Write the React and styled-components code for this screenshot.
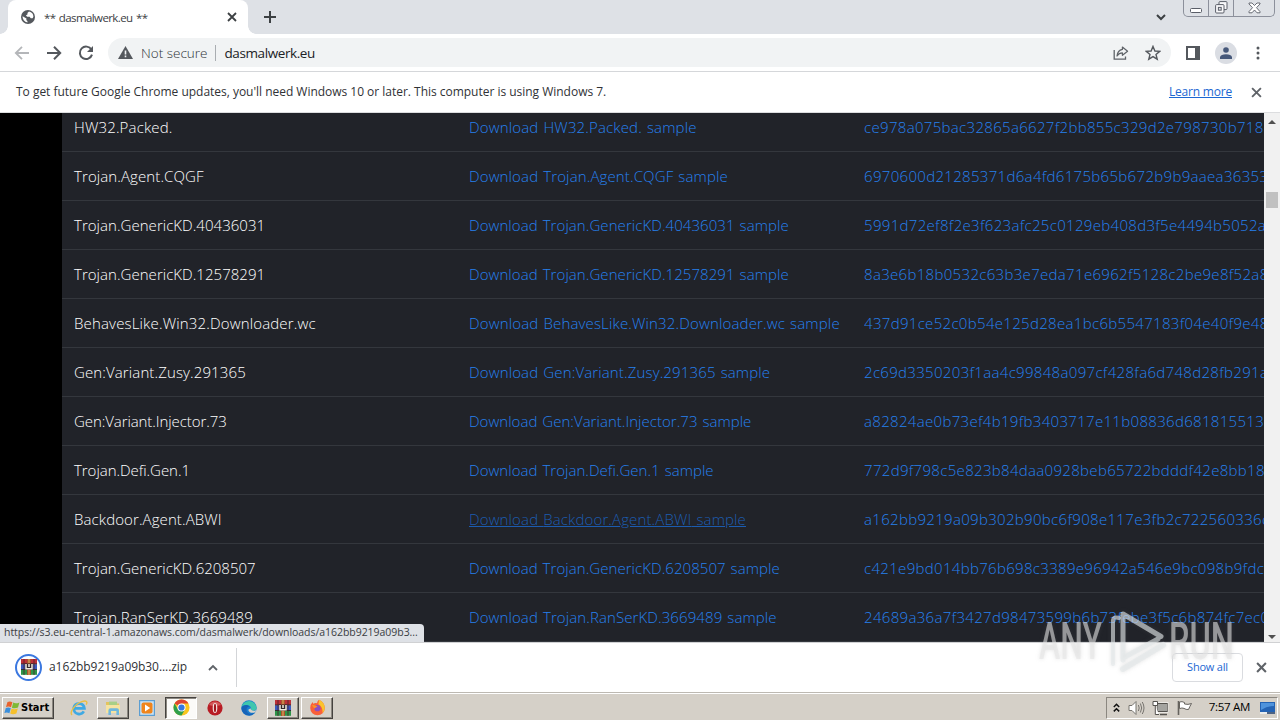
import React from 'react';
import styled, { createGlobalStyle } from 'styled-components';

const GlobalStyle = createGlobalStyle`
    * { box-sizing: border-box; }
    body {
        margin: 0;
        overflow: hidden;
        font-family: "Open Sans", "Noto Sans", sans-serif;
    }
    svg { display: block; flex: none; }
`;

// nameGap / linkGap: letter spacing of the two text columns
const rows = [
    { name: 'HW32.Packed.', nameGap: 0.15, linkGap: 0.15, hash: 'ce978a075bac32865a6627f2bb855c329d2e798730b718' },
    { name: 'Trojan.Agent.CQGF', nameGap: 0.1, linkGap: 0.13, hash: '6970600d21285371d6a4fd6175b65b672b9b9aaea36353' },
    { name: 'Trojan.GenericKD.40436031', nameGap: 0.04, linkGap: 0.07, hash: '5991d72ef8f2e3f623afc25c0129eb408d3f5e4494b5052a' },
    { name: 'Trojan.GenericKD.12578291', nameGap: 0.04, linkGap: 0.07, hash: '8a3e6b18b0532c63b3e7eda71e6962f5128c2be9e8f52a8' },
    { name: 'BehavesLike.Win32.Downloader.wc', nameGap: 0.16, linkGap: 0.155, hash: '437d91ce52c0b54e125d28ea1bc6b5547183f04e40f9e48' },
    { name: 'Gen:Variant.Zusy.291365', nameGap: 0.12, linkGap: 0.14, hash: '2c69d3350203f1aa4c99848a097cf428fa6d748d28fb291a' },
    { name: 'Gen:Variant.Injector.73', nameGap: -0.08, linkGap: 0.03, hash: 'a82824ae0b73ef4b19fb3403717e11b08836d681815513' },
    { name: 'Trojan.Defi.Gen.1', nameGap: -0.04, linkGap: 0.04, hash: '772d9f798c5e823b84daa0928beb65722bdddf42e8bb18' },
    { name: 'Backdoor.Agent.ABWI', nameGap: 0.1, linkGap: 0.13, hash: 'a162bb9219a09b302b90bc6f908e117e3fb2c722560336c', hovered: true },
    { name: 'Trojan.GenericKD.6208507', nameGap: 0, linkGap: 0.06, hash: 'c421e9bd014bb76b698c3389e96942a546e9bc098b9fdca' },
    { name: 'Trojan.RanSerKD.3669489', nameGap: 0.08, linkGap: 0.1, hash: '24689a36a7f3427d98473599b6b73febe3f5c6b874fc7ec0' },
];

const CloseIcon = ({ size = 10, color = '#5f6368', width = 2 }) => (
    <svg width={size} height={size} viewBox="0 0 10 10">
        <path d="M1 1L9 9M9 1L1 9" stroke={color} strokeWidth={width} />
    </svg>
);

const GlobeIcon = () => (
    <svg width="14" height="14" viewBox="0 0 14 14">
        <circle cx="7" cy="7" r="7" fill="#54585d" />
        <path d="M1.6 6.2L4.6 8.1L5.6 8.8L5.2 10L6.4 11L6.5 12.4A5.5 5.5 0 0 1 1.6 6.2Z" fill="#fff" />
        <path d="M8 1.5L6.4 3L6.6 4.2L4.9 5.4L6.2 6.7H8.6L9.8 8.3L11.6 8.2L12.4 6.8A5.5 5.5 0 0 0 8 1.5Z" fill="#fff" />
    </svg>
);

const WinrarIcon = ({ size = 18 }) => (
    <svg width={size} height={size} viewBox="0 0 18 18">
        <rect x="1" y="1" width="16" height="5" fill="#bd3038" />
        <rect x="1" y="6.3" width="16" height="5" fill="#3a5ac0" />
        <rect x="1" y="11.6" width="16" height="5.2" fill="#2d9447" />
        <path d="M1 6H17M1 11.5H17" stroke="#24242c" strokeWidth=".9" />
        <path d="M4 1V17M14 1V17" stroke="#4a2228" strokeWidth=".8" />
        <rect x="7" y="1" width="4" height="16" fill="#a8542e" />
        <path d="M9 1V5M9 12V17" stroke="#e6b860" strokeWidth="1" />
        <rect x="5" y="5.6" width="8" height="6" fill="#33282c" />
        <path d="M6 6V10.8H12V6M9 6V9" fill="none" stroke="#f3eee0" strokeWidth="1.5" />
    </svg>
);

const WindowsFlag = () => (
    <svg width="17" height="16" viewBox="0 0 17 16">
        <path d="M3.5 2Q6 .7 8.4 2.2L7 7.3Q4.6 6 2 7.1Z" fill="#e8622c" />
        <path d="M9.2 2.6Q12 4 15.4 2.4L14 7.6Q10.6 9 7.9 7.7Z" fill="#7fb935" />
        <path d="M1.8 8Q4.4 6.9 6.8 8.2L5.4 13.3Q3 12 .4 13.1Z" fill="#3b8fdc" />
        <path d="M7.6 8.6Q10.4 9.9 13.8 8.4L12.4 13.5Q9 15 6.2 13.6Z" fill="#f6c02c" />
    </svg>
);

const IeIcon = () => (
    <svg width="18" height="18" viewBox="0 0 18 18">
        <path d="M4 9.4H14.4A5.4 5.4 0 0 0 3.8 8.6V10A5.4 5.4 0 0 0 13.8 12.4" fill="none" stroke="#3fa9e3" strokeWidth="2.7" />
        <path d="M2 16C-.8 13.6 4.6 5.2 11.8 2.6C16.6 1 17.8 2.8 16.2 5.6" fill="none" stroke="#e9bf45" strokeWidth="1.4" />
    </svg>
);

const FolderIcon = () => (
    <svg width="18" height="18" viewBox="0 0 18 18">
        <path d="M2 3H7L8 4.5H15V14H2Z" fill="#e3c35f" />
        <path d="M5 2.6H13V6H5Z" fill="#a8cf86" />
        <path d="M2 6H16V14H2Z" fill="#f6e3a0" />
        <path d="M4.4 16V11.5Q4.4 9.3 6.5 9.3H13Q15 9.3 15 11.5V16H12.4V12H7V16Z" fill="#6fb7dc" />
    </svg>
);

const PlayerIcon = () => (
    <svg width="16" height="16" viewBox="0 0 16 16">
        <rect x=".6" y=".6" width="14.8" height="14.8" fill="#c9e1f4" stroke="#5c9ed2" strokeWidth="1.2" />
        <rect x="2.5" y="2.5" width="11" height="11" rx="2" fill="#f0851c" />
        <path d="M6 4.6L11.2 8L6 11.4Z" fill="#fff" />
    </svg>
);

const ChromeIcon = () => (
    <svg width="17" height="17" viewBox="0 0 18 18">
        <circle cx="9" cy="9" r="8.5" fill="#f8c51e" />
        <path d="M9 9L1.64 4.75A8.5 8.5 0 0 1 16.36 4.75H9Z" fill="#de4432" />
        <path d="M1.64 4.75A8.5 8.5 0 0 0 9 17.5L12.7 11.1L9 9L5.3 11.1Z" fill="#2e9f4c" />
        <circle cx="9" cy="9" r="4.3" fill="#fff" />
        <circle cx="9" cy="9" r="3.3" fill="#3478e0" />
    </svg>
);

const OperaIcon = () => (
    <svg width="16" height="16" viewBox="0 0 16 16">
        <circle cx="8" cy="8" r="7.6" fill="#b81c24" />
        <path d="M2 5A7 7 0 0 1 14 5Q8 7 2 5Z" fill="#d4585a" />
        <ellipse cx="8" cy="8" rx="2.3" ry="5" fill="#f4e3e1" />
        <ellipse cx="8" cy="8" rx="1.1" ry="4.3" fill="#a0141c" />
    </svg>
);

const EdgeIcon = () => (
    <svg width="16" height="16" viewBox="0 0 16 16">
        <circle cx="8" cy="8" r="7.7" fill="#1a7fd0" />
        <path d="M.5 7A7.7 7.7 0 0 1 15.7 8C15.4 10.6 12.2 11.2 9.8 10.2C11 8.2 9.4 5.2 6.2 5.2C3.4 5.2 1 6 .5 7Z" fill="#3fc6ae" />
        <path d="M.4 8C1.4 4.6 6.6 4 8.8 6.6C6.2 6.4 4.8 9 6 11.4C7.2 14 10.6 14.4 14 12.6A7.7 7.7 0 0 1 .4 8Z" fill="#1763b8" />
        <path d="M9.6 8.3C9.3 10.5 12.6 11.8 15.8 9.8L14.2 12.3C11 13.6 7.6 12.6 7.3 9.7Z" fill="#d8d3cb" />
    </svg>
);

const FirefoxIcon = () => (
    <svg width="17" height="17" viewBox="0 0 17 17">
        <path d="M10 .8Q15.8 3.6 15.8 9A7.3 7.3 0 0 1 1.2 9Q1.2 5.5 3.6 3L4.2 4.8Q6 3.6 8 4.2Q8.3 2.2 10 .8Z" fill="#f9603a" />
        <path d="M10 .8Q15.8 3.6 15.8 9Q15.6 12 13.6 14Q14 8 9.4 5.2Z" fill="#fbc42d" />
        <circle cx="8.4" cy="9.2" r="3.1" fill="#8a4fc4" />
        <path d="M3 6Q6.2 5.6 8.6 7.7Q6.4 8 5.6 9.6Q4 8.6 3 6Z" fill="#fb9327" />
    </svg>
);

const Watermark = () => (
    <WatermarkLayer>
        <svg width="200" height="72" viewBox="0 0 200 72">
            <g fill="#e6e6e6" fillOpacity=".58" fontFamily="Roboto, sans-serif" fontSize="51" fontWeight="500">
                <text x="3" y="51" textLength="63" lengthAdjust="spacingAndGlyphs">ANY</text>
                <text x="133" y="51" textLength="65" lengthAdjust="spacingAndGlyphs">RUN</text>
            </g>
            <g fill="none" stroke="#e3e8ea" strokeOpacity=".62" strokeLinecap="round" strokeLinejoin="round">
                <path d="M77 12V56M83 10Q77 8 77 13" strokeWidth="4" />
                <path d="M87 52V6L125 28.5M87 50L122 31" strokeWidth="5" />
                <path d="M87 61L127 37" strokeWidth="6" />
            </g>
        </svg>
    </WatermarkLayer>
);

export default function App() {
    return (
        <Screen>
            <GlobalStyle />
            <TabStrip>
                <Tab>
                    <GlobeIcon />
                    <TabTitle>** dasmalwerk.eu **</TabTitle>
                    <CloseIcon size={10} color="#3c4043" width={1.8} />
                </Tab>
                <NewTab>
                    <svg width="12" height="12" viewBox="0 0 12 12">
                        <path d="M6 0V12M0 6H12" stroke="#3c4043" strokeWidth="2" />
                    </svg>
                </NewTab>
                <TabSearch>
                    <svg width="10" height="7" viewBox="0 0 10 7">
                        <path d="M1 1L5 5L9 1" fill="none" stroke="#3c4043" strokeWidth="2" />
                    </svg>
                </TabSearch>
                <WindowControls>
                    <ControlButton $width={24}>
                        <svg width="13" height="6" viewBox="0 0 13 6">
                            <rect x=".5" y=".5" width="11" height="4" rx="1" fill="#fff" stroke="#5a5e68" />
                        </svg>
                    </ControlButton>
                    <ControlButton $width={25}>
                        <svg width="13" height="13" viewBox="0 0 13 13">
                            <rect x="4" y=".6" width="8" height="8" rx="1" fill="#f8f8fa" stroke="#5a5e68" />
                            <rect x=".6" y="3.6" width="8.4" height="8.4" rx="1" fill="#f8f8fa" stroke="#5a5e68" />
                            <rect x="3.4" y="6.4" width="2.8" height="2.8" fill="#dee1e6" stroke="#5a5e68" />
                        </svg>
                    </ControlButton>
                    <ControlButton $width={41}>
                        <svg width="13" height="12" viewBox="0 0 13 12">
                            <path d="M1 1H4L6.5 3.5L9 1H12V2L8.5 5.7L12 9.6V10.8H9L6.5 8L4 10.8H1V9.6L4.5 5.7L1 2Z" fill="#fff" stroke="#5a5e68" strokeWidth=".9" />
                        </svg>
                    </ControlButton>
                </WindowControls>
            </TabStrip>

            <Toolbar>
                <NavButton>
                    <svg width="16" height="16" viewBox="0 0 16 16">
                        <path d="M15 8H2M8 1.8L1.8 8L8 14.2" fill="none" stroke="#b4b6b9" strokeWidth="1.8" />
                    </svg>
                </NavButton>
                <NavButton>
                    <svg width="16" height="16" viewBox="0 0 16 16">
                        <path d="M1 8H14M8 1.8L14.2 8L8 14.2" fill="none" stroke="#54585d" strokeWidth="2" />
                    </svg>
                </NavButton>
                <NavButton>
                    <svg width="16" height="16" viewBox="0 0 16 16">
                        <path d="M13.4 4.6A6.2 6.2 0 1 0 14 9.6" fill="none" stroke="#54585d" strokeWidth="2" />
                        <path d="M15 1V7H9Z" fill="#54585d" />
                    </svg>
                </NavButton>
                <AddressBar>
                    <svg width="15" height="13" viewBox="0 0 15 13">
                        <path d="M7.5 0L15 13H0Z" fill="#54585d" />
                        <path d="M7.5 4.6V8.4M7.5 9.6V11.2" stroke="#f1f3f4" strokeWidth="1.6" />
                    </svg>
                    <Security>Not secure</Security>
                    <AddressDivider />
                    <Url>dasmalwerk.eu</Url>
                    <AddressActions>
                        <svg width="16" height="16" viewBox="0 0 16 16">
                            <path d="M1.2 5V14.2H12.5V11.5" fill="none" stroke="#5f6368" strokeWidth="1.3" />
                            <path d="M9.4 2L14.6 6.2L9.4 10.3V7.9Q6 7.9 4 11Q4.6 5.2 9.4 4.4Z" fill="none" stroke="#5f6368" strokeWidth="1.2" strokeLinejoin="round" />
                        </svg>
                        <svg width="16" height="16" viewBox="0 0 16 16">
                            <path d="M8 1.4L9.9 6L14.8 6.3L11 9.5L12.2 14.2L8 11.6L3.8 14.2L5 9.5L1.2 6.3L6.1 6Z" fill="none" stroke="#54585d" strokeWidth="1.4" />
                        </svg>
                    </AddressActions>
                </AddressBar>
                <ToolbarActions>
                    <svg width="14" height="14" viewBox="0 0 14 14">
                        <path d="M1 1H13V13H1Z" fill="none" stroke="#54585d" strokeWidth="2" />
                        <path d="M9 1H13V13H9Z" fill="#54585d" />
                    </svg>
                    <Avatar>
                        <svg width="12" height="12" viewBox="0 0 12 12">
                            <circle cx="6" cy="3" r="2.8" fill="#46587a" />
                            <path d="M0 12V10Q1 7.3 6 7.2Q11 7.3 12 10V12Z" fill="#46587a" />
                        </svg>
                    </Avatar>
                    <svg width="4" height="14" viewBox="0 0 4 14">
                        <circle cx="2" cy="2" r="1.5" fill="#54585d" />
                        <circle cx="2" cy="7" r="1.5" fill="#54585d" />
                        <circle cx="2" cy="12" r="1.5" fill="#54585d" />
                    </svg>
                </ToolbarActions>
            </Toolbar>

            <InfoBar>
                <InfoText>To get future Google Chrome updates, you'll need Windows 10 or later. This computer is using Windows 7.</InfoText>
                <LearnMore>Learn more</LearnMore>
                <CloseIcon size={11} width={1.7} />
            </InfoBar>

            <Page>
                <Table>
                    {rows.map((row) => (
                        <Row key={row.name}>
                            <Name $gap={row.nameGap}>{row.name}</Name>
                            <DownloadLink $gap={row.linkGap} $hovered={row.hovered}>Download {row.name} sample</DownloadLink>
                            <Hash>{row.hash}</Hash>
                        </Row>
                    ))}
                </Table>
                <Scrollbar>
                    <ScrollArrow />
                    <Thumb />
                    <ScrollArrow $down />
                </Scrollbar>
                <StatusBubble>https://s3.eu-central-1.amazonaws.com/dasmalwerk/downloads/a162bb9219a09b3...</StatusBubble>
            </Page>

            <DownloadShelf>
                <FileRing><WinrarIcon size={18} /></FileRing>
                <FileName>a162bb9219a09b30....zip</FileName>
                <svg width="10" height="7" viewBox="0 0 10 7">
                    <path d="M1 6L5 2L9 6" fill="none" stroke="#5f6368" strokeWidth="1.8" />
                </svg>
                <ShelfDivider />
                <ShowAll>Show all</ShowAll>
                <CloseIcon size={11} width={1.9} />
            </DownloadShelf>

            <Taskbar>
                <StartButton>
                    <WindowsFlag />
                    <StartLabel>Start</StartLabel>
                </StartButton>
                <TaskList>
                    <Task><IeIcon /></Task>
                    <Task $open><FolderIcon /></Task>
                    <Task><PlayerIcon /></Task>
                    <Task $open $active><ChromeIcon /></Task>
                    <Task><OperaIcon /></Task>
                    <Task><EdgeIcon /></Task>
                    <Task $open><WinrarIcon size={18} /></Task>
                    <Task $open><FirefoxIcon /></Task>
                </TaskList>
                <Tray>
                    <svg width="7" height="10" viewBox="0 0 7 10">
                        <path d="M.8 4L3.5 1.3L6.2 4M.8 8.4L3.5 5.7L6.2 8.4" fill="none" stroke="#111" strokeWidth="1.5" />
                    </svg>
                    <svg width="17" height="16" viewBox="0 0 17 16">
                        <path d="M1 5.5H4L8 1.5V14.5L4 10.5H1Z" fill="#fff" stroke="#77746f" />
                        <path d="M10.4 5Q12 8 10.4 11M12.4 3.5Q15 8 12.4 12.5M14.3 2Q17.7 8 14.3 14" fill="none" stroke="#77746f" />
                    </svg>
                    <svg width="17" height="16" viewBox="0 0 17 16">
                        <rect x="5.5" y="3.5" width="10" height="8" fill="#a4a4a0" stroke="#55534f" />
                        <rect x="5" y="2.6" width="11" height="10" fill="none" stroke="#fff" strokeWidth=".5" />
                        <path d="M8 14.5H15" stroke="#55534f" strokeWidth="1.5" />
                        <path d="M1 1.5H5.5V5.5H1ZM3.3 6V14.5H7" fill="#fff" stroke="#55534f" />
                    </svg>
                    <svg width="17" height="16" viewBox="0 0 17 16">
                        <path d="M2.5 1V15" stroke="#66635e" strokeWidth="1.6" />
                        <path d="M3.5 2Q6 1 8.5 2.5V4Q12 5 15.5 3.5Q14 6 12.5 9.5Q10 9.8 8 8.4Q6 7.5 3.5 8.6Z" fill="#fff" stroke="#66635e" />
                    </svg>
                    <Clock>7:57 AM</Clock>
                    <svg width="15" height="13" viewBox="0 0 15 13">
                        <rect x="0" y="1" width="15" height="10" fill="#2463b4" />
                        <path d="M1 2H14V5Q7 5 1 9Z" fill="#4f93dc" />
                        <path d="M0 12H7" stroke="#eef2f6" strokeWidth="1.6" />
                        <path d="M7 12H15" stroke="#2b4872" strokeWidth="1.6" />
                    </svg>
                </Tray>
            </Taskbar>
            <Watermark />
        </Screen>
    );
}

const Screen = styled.div`
    position: relative;
    display: flex;
    flex-direction: column;
    width: 1280px;
    height: 720px;
    overflow: hidden;
    background: #fff;
`;

const TabStrip = styled.div`
    display: flex;
    align-items: flex-start;
    height: 34px;
    padding: 0 5px 0 8px;
    background: #dee1e6;
`;

const Tab = styled.div`
    position: relative;
    display: flex;
    align-items: center;
    width: 240px;
    height: 34px;
    padding: 0 11px 0 13px;
    border-radius: 8px 8px 0 0;
    background: #fff;

    &::before, &::after {
        content: '';
        position: absolute;
        bottom: 0;
        width: 8px;
        height: 8px;
    }
    &::before {
        left: -8px;
        background: radial-gradient(circle at 0 0, transparent 7.5px, #fff 8px);
    }
    &::after {
        right: -8px;
        background: radial-gradient(circle at 100% 0, transparent 7.5px, #fff 8px);
    }
`;

const TabTitle = styled.span`
    flex: 1;
    margin-left: 9px;
    font-size: 11.5px;
    letter-spacing: -0.6px;
    word-spacing: 1px;
    color: #3c4043;
`;

const NewTab = styled.div`
    display: flex;
    margin: 11px 0 0 16px;
`;

const TabSearch = styled.div`
    margin: 14px 17px 0 auto;
`;

const WindowControls = styled.div`
    display: flex;
    height: 17px;
    border: 1px solid #8c909b;
    border-top: 0;
    border-radius: 0 0 5px 5px;
`;

const ControlButton = styled.div`
    display: flex;
    align-items: flex-end;
    justify-content: center;
    width: ${(p) => p.$width}px;
    padding-bottom: 2px;

    & + & {
        border-left: 1px solid #8c909b;
    }
`;

const Toolbar = styled.div`
    display: flex;
    align-items: center;
    height: 38px;
    padding: 0 20px 0 14px;
    border-bottom: 1px solid #d5d7da;
`;

const NavButton = styled.div`
    width: 32px;
`;

const AddressBar = styled.div`
    display: flex;
    flex: 1;
    align-items: center;
    height: 29px;
    margin: 0 15px 0 -2px;
    padding: 0 10px;
    border-radius: 15px;
    background: #f1f3f4;
`;

const Security = styled.span`
    margin-left: 8px;
    font-size: 13.5px;
    font-weight: 300;
    color: #2f3338;
`;

const AddressDivider = styled.div`
    width: 1px;
    height: 16px;
    margin: 0 8px;
    background: #a9adb1;
`;

const Url = styled.span`
    font-size: 13.5px;
    letter-spacing: -0.4px;
    color: #202124;
`;

const AddressActions = styled.div`
    display: flex;
    gap: 16px;
    margin-left: auto;
`;

const ToolbarActions = styled.div`
    display: flex;
    align-items: center;
    gap: 15px;

    & > :last-child {
        margin-left: 4px;
    }
`;

const Avatar = styled.div`
    display: flex;
    align-items: center;
    justify-content: center;
    width: 22px;
    height: 22px;
    border-radius: 50%;
    background: #dadde3;
`;

const InfoBar = styled.div`
    display: flex;
    align-items: center;
    height: 41px;
    padding: 0 18px 0 16px;
    border-bottom: 1px solid #dcdddf;
    font-size: 12px;
    color: #303236;
`;

const InfoText = styled.span`
    flex: 1;
    padding-bottom: 2px;
    letter-spacing: -0.02px;
`;

const LearnMore = styled.span`
    margin-right: 19px;
    padding-bottom: 2px;
    letter-spacing: -0.2px;
    color: #1c67d2;
    text-decoration: underline;
`;

const Page = styled.div`
    position: relative;
    display: flex;
    height: 529px;
    overflow: hidden;
    background: #000;
`;

const Table = styled.div`
    flex: 1;
    min-width: 0;
    margin: -10px 0 0 62px;
    overflow: hidden;
    background: #212329;
    font-size: 15px;
    font-weight: 300;
    white-space: nowrap;
`;

const Row = styled.div`
    display: grid;
    grid-template-columns: 395px 395px 1fr;
    align-items: center;
    height: 49px;
    padding-left: 12px;
    border-bottom: 1px solid #34373d;
`;

const Name = styled.span`
    letter-spacing: ${(p) => p.$gap}px;
    color: #fff;
`;

const DownloadLink = styled.span`
    letter-spacing: ${(p) => p.$gap}px;
    word-spacing: 1px;
    color: ${(p) => (p.$hovered ? '#1c5cb0' : '#2680ee')};
    text-decoration: ${(p) => (p.$hovered ? 'underline' : 'none')};
`;

const Hash = styled.span`
    min-width: 0;
    overflow: hidden;
    letter-spacing: 0.32px;
    color: #2680ee;
`;

const Scrollbar = styled.div`
    display: flex;
    flex-direction: column;
    align-items: center;
    width: 16px;
    padding: 7px 0 3px;
    background: #f1f1f1;
`;

const ScrollArrow = styled.div`
    border: 4px solid transparent;
    border-top: ${(p) => (p.$down ? '4px solid #505050' : '0')};
    border-bottom: ${(p) => (p.$down ? '0' : '4px solid #505050')};
    margin-top: ${(p) => (p.$down ? 'auto' : '0')};
`;

const Thumb = styled.div`
    width: 12px;
    height: 16px;
    margin-top: 68px;
    background: #c1c1c1;
`;

const StatusBubble = styled.div`
    position: absolute;
    left: 0;
    bottom: 0;
    width: 424px;
    height: 18px;
    padding-left: 4px;
    border-radius: 0 4px 0 0;
    background: #dee1e6;
    font-size: 10.5px;
    letter-spacing: -0.04px;
    line-height: 17px;
    white-space: nowrap;
    color: #3a3d42;
`;

const DownloadShelf = styled.div`
    display: flex;
    align-items: center;
    height: 50px;
    padding: 0 13px 1px 15px;
    border-top: 1px solid #d0d1d3;
`;

const FileRing = styled.div`
    display: flex;
    align-items: center;
    justify-content: center;
    width: 27px;
    height: 27px;
    border: 2px solid #3b78e0;
    border-radius: 50%;
`;

const FileName = styled.span`
    width: 159px;
    margin-left: 7px;
    padding-bottom: 2px;
    font-size: 12px;
    letter-spacing: -0.06px;
    color: #303236;
`;

const ShelfDivider = styled.div`
    width: 1px;
    height: 39px;
    margin-left: 18px;
    background: #d3d5d8;
`;

const ShowAll = styled.div`
    width: 71px;
    height: 29px;
    margin: 0 13px 0 auto;
    border: 1px solid #dadce0;
    border-radius: 4px;
    font-size: 11px;
    letter-spacing: -0.2px;
    line-height: 25px;
    text-align: center;
    color: #1c67d2;
`;

const Taskbar = styled.div`
    display: flex;
    align-items: center;
    height: 28px;
    padding: 2px 2px 0;
    border-top: 1px solid #bdb9b2;
    background: #d5d0c8;
    box-shadow: inset 0 1px #fff;
`;

const StartButton = styled.div`
    display: flex;
    align-items: center;
    width: 52px;
    height: 22px;
    padding-left: 1px;
    border: 1px solid;
    border-color: #fff #45423f #45423f #fff;
    box-shadow: inset -1px -1px #8b8780;
`;

const StartLabel = styled.span`
    font-family: "DejaVu Sans Condensed", "DejaVu Sans", sans-serif;
    font-size: 11px;
    font-weight: 700;
    color: #000;
`;

const TaskList = styled.div`
    display: flex;
    gap: 2px;
    margin-left: 9px;
`;

const Task = styled.div`
    display: flex;
    align-items: center;
    justify-content: center;
    width: 32px;
    height: 22px;
    border: 1px solid ${(p) => (p.$open ? '' : 'transparent')};
    ${(p) => p.$open && `
        border-color: ${p.$active ? '#45423f #fff #fff #45423f' : '#fff #45423f #45423f #fff'};
        box-shadow: ${p.$active ? 'inset 1px 1px #8b8780' : 'inset -1px -1px #8b8780'};
    `}
    background: ${(p) => (p.$active ? '#fbfaf8' : 'transparent')};
`;

const Tray = styled.div`
    display: flex;
    align-items: center;
    gap: 7px;
    width: 172px;
    height: 22px;
    margin-left: auto;
    padding: 0 2px 0 6px;
    border: 1px solid;
    border-color: #8b8780 #fff #fff #8b8780;

    & > svg:nth-child(2) {
        margin-left: 1px;
    }
`;

const Clock = styled.span`
    margin: 0 3px 2px auto;
    font-size: 11.5px;
    letter-spacing: -0.3px;
    color: #000;
`;

const WatermarkLayer = styled.div`
    position: absolute;
    left: 1036px;
    top: 608px;
    filter: drop-shadow(0 0 2px rgba(110, 110, 110, 0.3));
`;
